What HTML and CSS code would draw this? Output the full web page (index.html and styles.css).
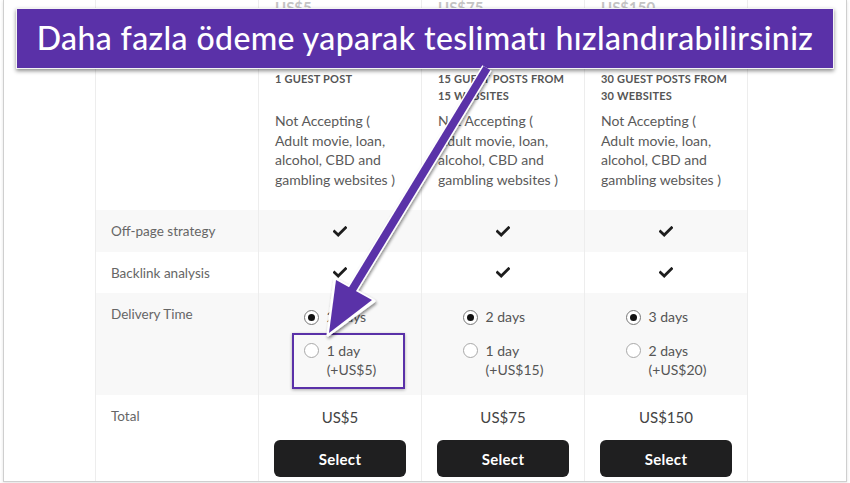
FILE: index.html
```html
<!DOCTYPE html>
<html lang="en">
<head>
<meta charset="utf-8">
<link rel="stylesheet" href="styles.css">
</head>
<body>
<div class="frame">
  <div class="table">
    <div class="cell head label-col"></div>
    <div class="cell head">
      <div class="peek">US$5</div>
      <div class="title">1 GUEST POST</div>
      <div class="desc">Not Accepting ( Adult movie, loan, alcohol, CBD and gambling websites )</div>
    </div>
    <div class="cell head">
      <div class="peek">US$75</div>
      <div class="title">15 GUEST POSTS FROM 15 WEBSITES</div>
      <div class="desc">Not Accepting ( Adult movie, loan, alcohol, CBD and gambling websites )</div>
    </div>
    <div class="cell head">
      <div class="peek">US$150</div>
      <div class="title">30 GUEST POSTS FROM 30 WEBSITES</div>
      <div class="desc">Not Accepting ( Adult movie, loan, alcohol, CBD and gambling websites )</div>
    </div>

    <div class="cell label shade">Off-page strategy</div>
    <div class="cell check shade"><svg class="tick" viewBox="0 0 14 11"><path d="M1.5 5.5 L5.2 9 L12.5 1.8" /></svg></div>
    <div class="cell check shade"><svg class="tick" viewBox="0 0 14 11"><path d="M1.5 5.5 L5.2 9 L12.5 1.8" /></svg></div>
    <div class="cell check shade"><svg class="tick" viewBox="0 0 14 11"><path d="M1.5 5.5 L5.2 9 L12.5 1.8" /></svg></div>

    <div class="cell label">Backlink analysis</div>
    <div class="cell check"><svg class="tick" viewBox="0 0 14 11"><path d="M1.5 5.5 L5.2 9 L12.5 1.8" /></svg></div>
    <div class="cell check"><svg class="tick" viewBox="0 0 14 11"><path d="M1.5 5.5 L5.2 9 L12.5 1.8" /></svg></div>
    <div class="cell check"><svg class="tick" viewBox="0 0 14 11"><path d="M1.5 5.5 L5.2 9 L12.5 1.8" /></svg></div>

    <div class="cell label shade tall">Delivery Time</div>
    <div class="cell delivery shade">
      <div class="options">
        <div class="opt"><span class="radio on"></span><span>2 days</span></div>
        <div class="opt"><span class="radio"></span><span>1 day<br>(+US$5)</span></div>
      </div>
    </div>
    <div class="cell delivery shade">
      <div class="options">
        <div class="opt"><span class="radio on"></span><span>2 days</span></div>
        <div class="opt"><span class="radio"></span><span>1 day<br>(+US$15)</span></div>
      </div>
    </div>
    <div class="cell delivery shade">
      <div class="options">
        <div class="opt"><span class="radio on"></span><span>3 days</span></div>
        <div class="opt"><span class="radio"></span><span>2 days<br>(+US$20)</span></div>
      </div>
    </div>

    <div class="cell label total-label">Total</div>
    <div class="cell total"><div class="price">US$5</div><button class="select">Select</button></div>
    <div class="cell total"><div class="price">US$75</div><button class="select">Select</button></div>
    <div class="cell total"><div class="price">US$150</div><button class="select">Select</button></div>
  </div>
</div>

<div class="banner" lang="tr">Daha fazla ödeme yaparak teslimatı hızlandırabilirsiniz</div>
<div class="highlight"></div>
<svg class="arrow" viewBox="0 0 850 483" width="850" height="483">
  <defs>
    <filter id="sh" x="-20%" y="-20%" width="140%" height="140%">
      <feDropShadow dx="1" dy="2" stdDeviation="1.5" flood-color="#000" flood-opacity="0.45"/>
    </filter>
  </defs>
  <g filter="url(#sh)">
    <line x1="487" y1="68" x2="352" y2="290" stroke="#ffffff" stroke-width="11"/>
    <polygon points="335,279 374,301 328,335" fill="#ffffff" stroke="#ffffff" stroke-width="3" stroke-linejoin="round"/>
    <line x1="487" y1="68" x2="352" y2="290" stroke="#5a31a8" stroke-width="8"/>
    <polygon points="336,280 372,300 329,333" fill="#5a31a8"/>
  </g>
</svg>
</body>
</html>
```

FILE: styles.css
```css
* { box-sizing: border-box; }
html, body { margin: 0; padding: 0; background: #fff; }
body {
  width: 850px;
  height: 483px;
  overflow: hidden;
  position: relative;
  font-family: Lato, "Noto Sans", sans-serif;
}
.frame {
  margin-left: 3px;
  width: 844px;
  height: 482px;
  border-left: 1.5px solid #cfcfcf;
  border-right: 1.5px solid #cfcfcf;
  border-bottom: 1.5px solid #cfcfcf;
  box-shadow: 0 1px 3px rgba(0,0,0,0.12);
  overflow: hidden;
}
.table {
  margin-left: 91px;
  width: 652px;
  display: grid;
  grid-template-columns: 163px 163px 163px 163px;
  grid-template-rows: 210px 42px 41px 102px 88px;
  border-left: 1px solid #ededed;
}
.cell {
  border-right: 1px solid #ededed;
  color: #555;
  font-size: 14px;
  line-height: 19.5px;
}
.shade { background: #f8f8f8; }
.head { padding: 0 16px; }
.peek {
  font-size: 15px;
  font-weight: 700;
  color: #c4c4c4;
  height: 10px;
  line-height: 14px;
  margin-top: 0;
  overflow: hidden;
}
.title {
  margin-top: 60px;
  min-height: 34px;
  font-size: 11px;
  line-height: 17px;
  font-weight: 700;
  color: #555;
  letter-spacing: 0.2px;
}
.desc {
  margin-top: 7px;
  font-size: 14px;
  line-height: 19.5px;
  color: #5a5a5a;
}
.label {
  padding: 12px 15px;
  font-size: 13.5px;
  line-height: 18px;
  color: #666;
}
.check {
  display: flex;
  align-items: center;
  justify-content: center;
}
.tick {
  width: 14px;
  height: 11px;
}
.tick path {
  fill: none;
  stroke: #1d1d1d;
  stroke-width: 2.8;
  stroke-linecap: square;
}
.delivery {
  display: flex;
  justify-content: center;
  padding-top: 14px;
}
.options {
  display: flex;
  flex-direction: column;
  gap: 14px;
}
.opt {
  display: flex;
  align-items: flex-start;
  gap: 8px;
  font-size: 14px;
  line-height: 19.5px;
  color: #555;
}
.radio {
  width: 15px;
  height: 15px;
  border-radius: 50%;
  border: 1px solid #a8a8a8;
  background: #fff;
  margin-top: 2.5px;
  flex: none;
  display: flex;
  align-items: center;
  justify-content: center;
}
.radio.on { border-color: #777; }
.radio.on::after {
  content: "";
  width: 7px;
  height: 7px;
  border-radius: 50%;
  background: #111;
}
.total {
  padding: 12px 16px 0;
  display: flex;
  flex-direction: column;
  align-items: center;
}
.price {
  font-size: 15px;
  line-height: 20px;
  color: #444;
}
.select {
  margin-top: 13px;
  width: 132px;
  height: 37px;
  border: none;
  border-radius: 6px;
  background: #1f1f20;
  color: #fff;
  font-family: Lato, "Noto Sans", sans-serif;
  font-weight: 700;
  font-size: 15px;
  letter-spacing: 0.3px;
}
.banner {
  position: absolute;
  left: 16px;
  top: 8px;
  width: 818px;
  height: 61px;
  background: #5a31a8;
  border: 1.5px solid #f4f4f4;
  box-shadow: 0 2px 4px rgba(0,0,0,0.45);
  color: #fff;
  font-family: Lato, "Noto Sans", sans-serif;
  font-size: 32px;
  font-weight: 500;
  letter-spacing: 0.4px;
  display: flex;
  align-items: center;
  justify-content: center;
  padding-bottom: 3px;
}
.highlight {
  position: absolute;
  left: 292px;
  top: 333px;
  width: 113px;
  height: 56px;
  border: 2.5px solid #5a31a8;
  box-shadow: 0 1px 3px rgba(0,0,0,0.3);
}
.arrow {
  position: absolute;
  left: 0;
  top: 0;
  pointer-events: none;
}
```
